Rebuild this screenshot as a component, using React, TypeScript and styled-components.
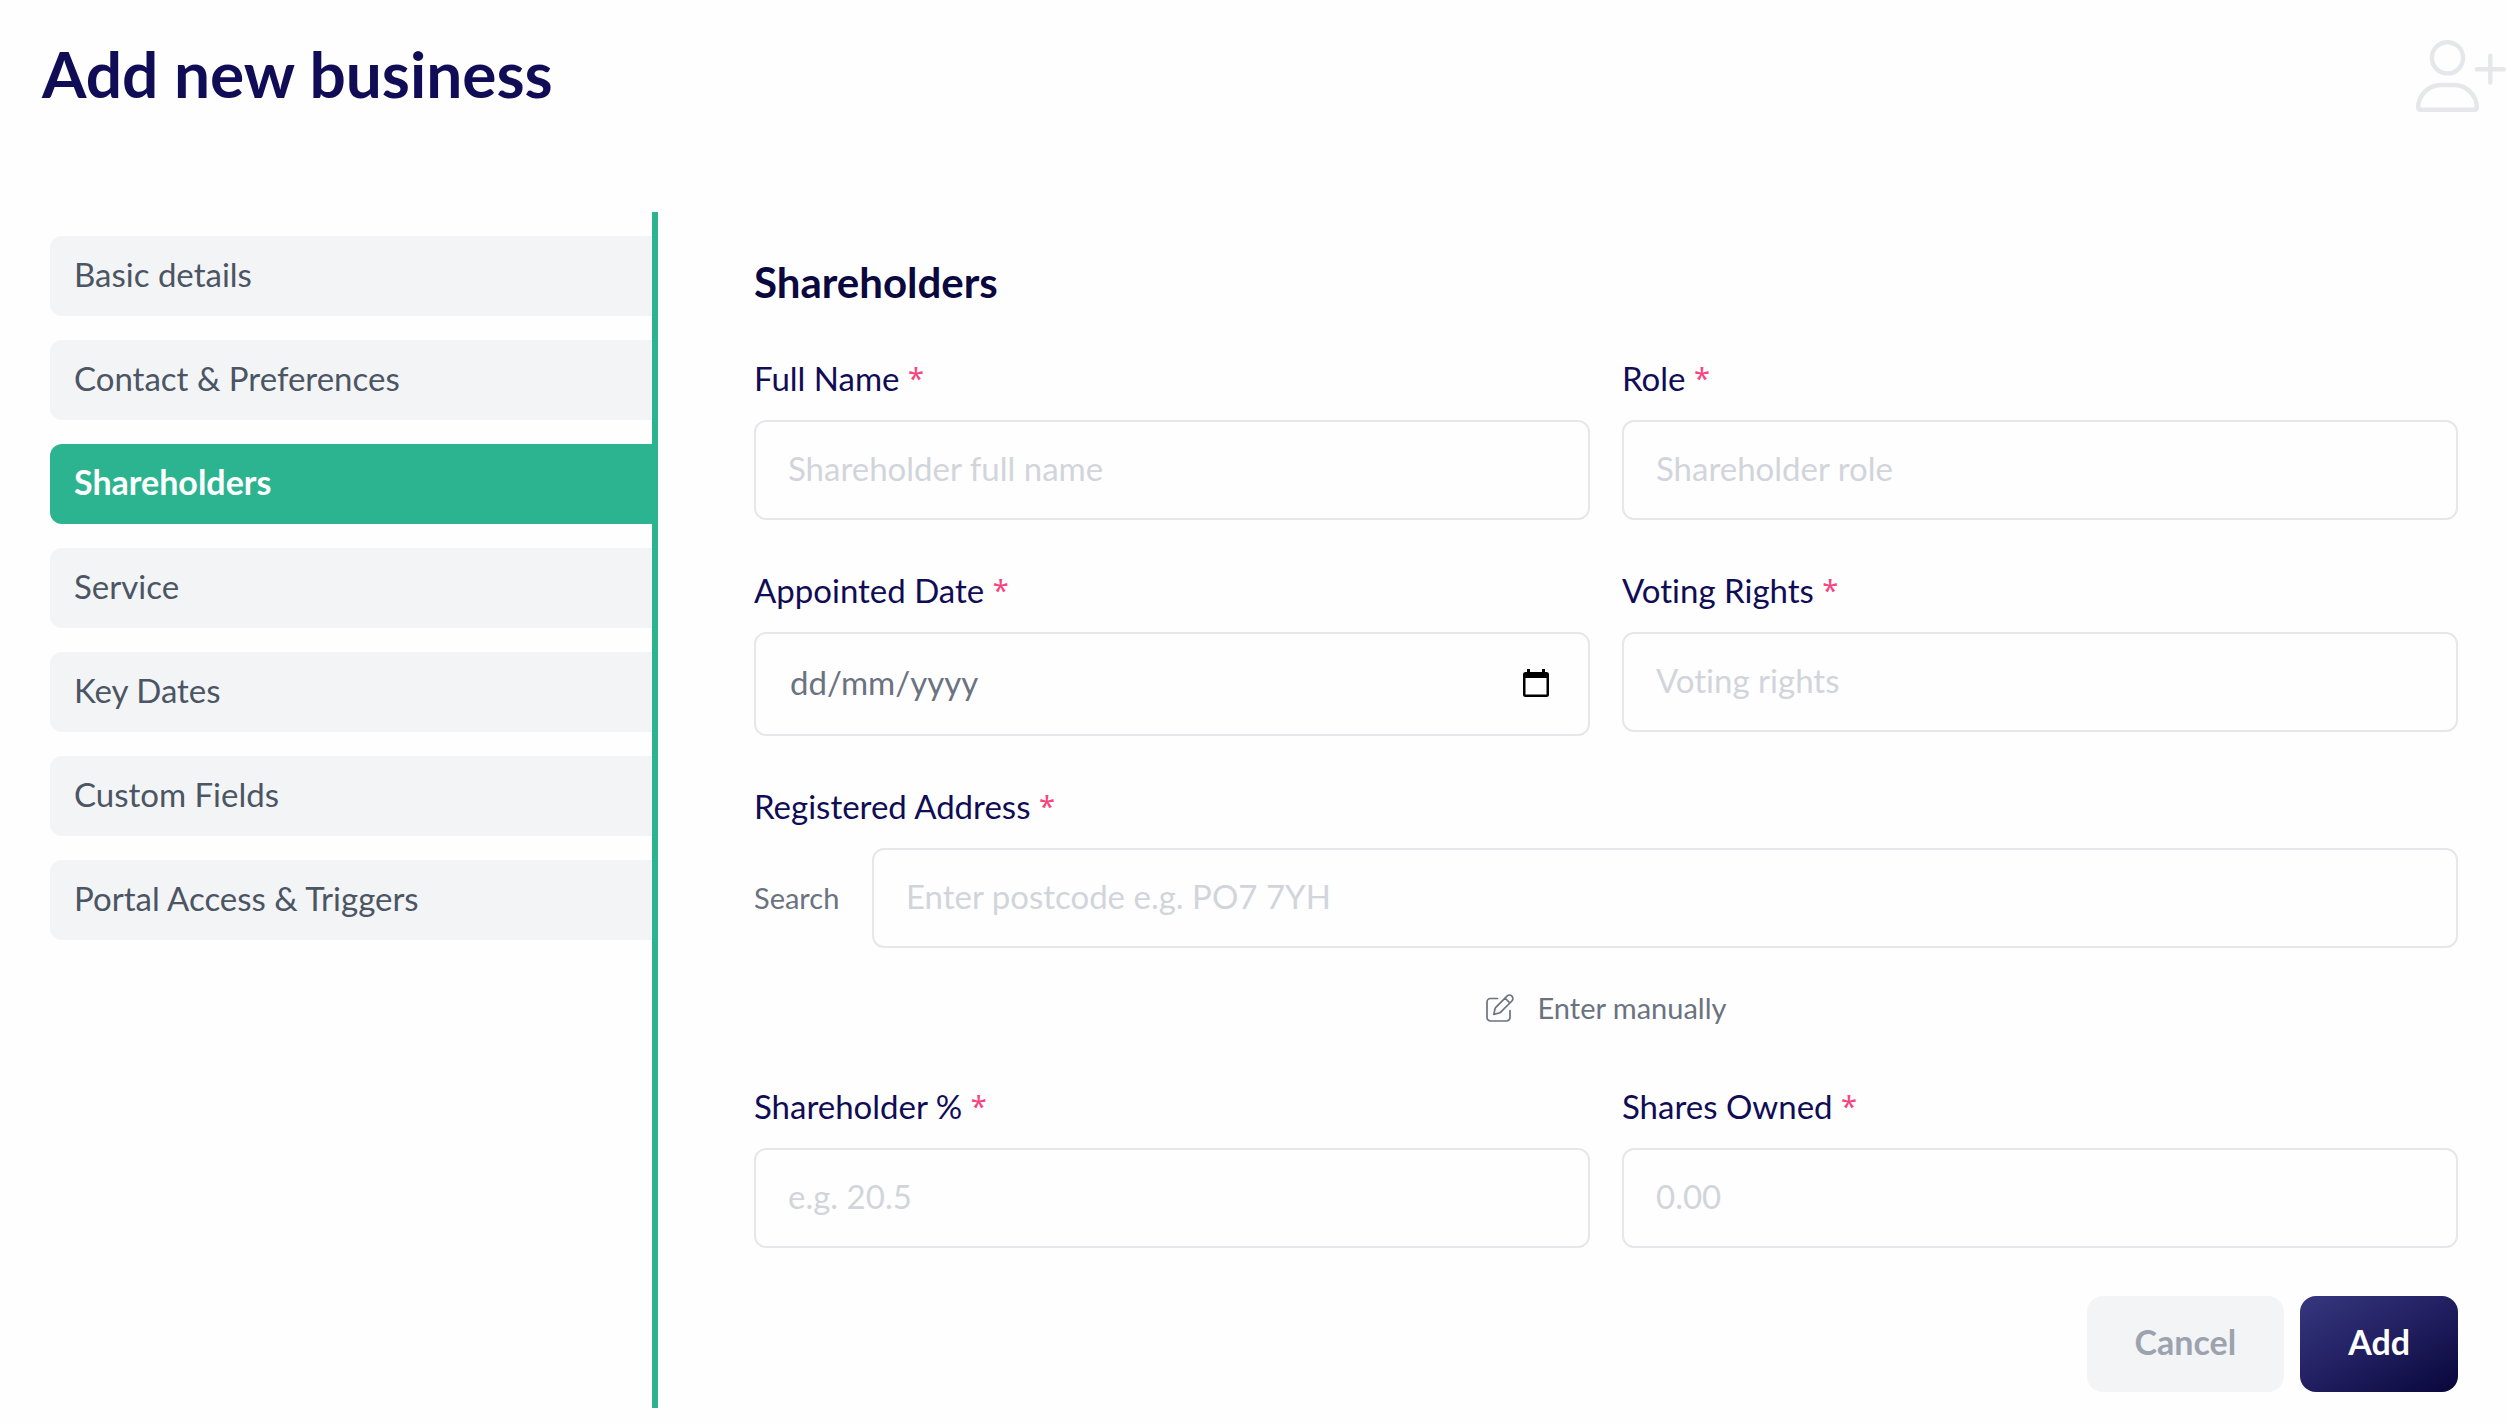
import React from 'react';
import styled, { createGlobalStyle, css } from 'styled-components';

const GlobalStyle = createGlobalStyle`
  *, *::before, *::after { box-sizing: border-box; }
  body {
    margin: 0;
    background: #fefefe;
    color: #100c55;
    font-family: Lato, "Noto Sans", sans-serif;
    font-size: 33px;
    line-height: 44px;
    font-variant-ligatures: none;
  }
  button, input { font: inherit; font-variant-ligatures: none; }
`;

const Page = styled.div`
  display: flex;
  flex-direction: column;
`;

const Header = styled.header`
  display: flex;
  justify-content: space-between;
  align-items: flex-start;
  padding: 36px 0 0 42px;
  height: 212px;
`;

const Title = styled.h1`
  margin: 0;
  font-size: 64px;
  line-height: 76px;
  font-weight: 700;
`;

const HeaderIcon = styled.svg`
  width: 90px;
  height: 72px;
  margin-top: 4px;
  color: #e5e7eb;
`;

const Body = styled.div`
  display: grid;
  grid-template-columns: 658px minmax(0, 1fr);
`;

const Sidebar = styled.nav`
  display: flex;
  flex-direction: column;
  gap: 24px;
  padding: 24px 0 24px 50px;
  border-right: 6px solid #2cb491;
`;

const Tab = styled.button<{ $active?: boolean }>`
  padding: 16px 24px 20px;
  border: 0;
  border-radius: 12px 0 0 12px;
  background: #f3f4f6;
  color: #4b5563;
  text-align: left;
  cursor: pointer;
  ${({ $active }) =>
    $active &&
    css`
      background: #2cb491;
      color: #ffffff;
      font-size: 34px;
      font-weight: 700;
    `}
`;

const Form = styled.form`
  display: flex;
  flex-direction: column;
  padding: 42px 48px 16px 96px;
`;

const Heading = styled.h2`
  margin: 0 0 46px;
  color: #0a083f;
  font-size: 42px;
  line-height: 56px;
  font-weight: 700;
`;

const Fields = styled.div`
  display: grid;
  grid-template-columns: repeat(2, minmax(0, 1fr));
  align-items: start;
  gap: 48px 32px;
`;

const FieldBox = styled.div<{ $wide?: boolean }>`
  display: flex;
  flex-direction: column;
  gap: 20px;
  ${({ $wide }) => $wide && 'grid-column: 1 / -1;'}
`;

const Label = styled.label`
  line-height: 44px;
`;

const Required = styled.span`
  color: #f8437f;
  font-family: "Noto Sans", sans-serif;
  font-size: 29px;
  line-height: 1;
  vertical-align: 2px;
`;

const Input = styled.input`
  width: 100%;
  min-width: 0;
  height: 100px;
  padding: 24px 32px 28px;
  border: 2px solid #e5e7eb;
  border-radius: 12px;
  background: transparent;
  color: #100c55;
  outline: none;
  &::placeholder { color: #d1d5db; opacity: 1; }
  &:focus { border-color: #2cb491; }
`;

const DateBox = styled.div`
  display: flex;
  align-items: center;
  height: 104px;
  padding: 0 32px 2px;
  border: 2px solid #e5e7eb;
  border-radius: 12px;
`;

const DateInput = styled.input`
  flex: 1;
  min-width: 0;
  padding: 0 2px 2px;
  border: 0;
  background: transparent;
  color: #6b7280;
  outline: none;
  &::placeholder { color: #6b7280; opacity: 1; }
`;

const IconButton = styled.button`
  display: flex;
  padding: 4px;
  border: 0;
  background: transparent;
  color: #000000;
  cursor: pointer;
`;

const CalendarIcon = styled.svg`
  width: 32px;
  height: 32px;
`;

const SearchRow = styled.div`
  display: grid;
  grid-template-columns: 86px minmax(0, 1fr);
  align-items: center;
  gap: 32px;
`;

const SearchLabel = styled.label`
  color: #6b7280;
  font-size: 29px;
`;

const ManualButton = styled.button`
  display: flex;
  align-items: center;
  align-self: center;
  gap: 24px;
  margin: 20px 0 8px;
  padding: 0;
  border: 0;
  background: transparent;
  color: #6b7280;
  font-size: 29px;
  line-height: 40px;
  cursor: pointer;
`;

const EditIcon = styled.svg`
  width: 28px;
  height: 28px;
`;

const Actions = styled.div`
  display: flex;
  justify-content: flex-end;
  gap: 16px;
  margin-top: 48px;
`;

const Button = styled.button<{ $primary?: boolean }>`
  padding: 24px 48px 28px;
  border: 0;
  border-radius: 16px;
  background: ${({ $primary }) =>
    $primary ? 'linear-gradient(150deg, #35377f 0%, #221f61 50%, #08063a 100%)' : '#f3f4f6'};
  color: ${({ $primary }) => ($primary ? '#ffffff' : '#9ca3af')};
  font-size: 34px;
  font-weight: 700;
  cursor: pointer;
`;

const tabs = [
  'Basic details',
  'Contact & Preferences',
  'Shareholders',
  'Service',
  'Key Dates',
  'Custom Fields',
  'Portal Access & Triggers',
];

function FieldLabel({ id, text }: { id: string; text: string }) {
  return (
    <Label htmlFor={id}>
      {text} <Required>*</Required>
    </Label>
  );
}

function TextField({ id, label, placeholder }: { id: string; label: string; placeholder: string }) {
  return (
    <FieldBox>
      <FieldLabel id={id} text={label} />
      <Input id={id} type="text" placeholder={placeholder} />
    </FieldBox>
  );
}

export default function App() {
  const [active, setActive] = React.useState('Shareholders');
  return (
    <Page>
      <GlobalStyle />
      <Header>
        <Title>Add new business</Title>
        <HeaderIcon viewBox="0 0 90 72" fill="none" stroke="currentColor" strokeWidth="4.4" strokeLinecap="round" strokeLinejoin="round" aria-hidden="true">
          <circle cx="31.5" cy="17.8" r="15.6" />
          <path d="M2.2 67.8C2.2 55.2 12.4 45 25 45h13c12.6 0 22.8 10.2 22.8 22.8a2 2 0 0 1-2 2H4.2a2 2 0 0 1-2-2z" />
          <path d="M60.9 29.3h26.9M74.3 15.6v26.9" />
        </HeaderIcon>
      </Header>
      <Body>
        <Sidebar aria-label="Sections">
          {tabs.map((tab) => (
            <Tab key={tab} type="button" $active={tab === active} onClick={() => setActive(tab)}>
              {tab}
            </Tab>
          ))}
        </Sidebar>
        <Form onSubmit={(e) => e.preventDefault()}>
          <Heading>Shareholders</Heading>
          <Fields>
            <TextField id="name" label="Full Name" placeholder="Shareholder full name" />
            <TextField id="role" label="Role" placeholder="Shareholder role" />
            <FieldBox>
              <FieldLabel id="appointed" text="Appointed Date" />
              <DateBox>
                <DateInput id="appointed" type="text" inputMode="numeric" placeholder="dd/mm/yyyy" />
                <IconButton type="button" aria-label="Choose date">
                  <CalendarIcon viewBox="0 0 32 32" aria-hidden="true">
                    <path
                      fill="currentColor"
                      fillRule="evenodd"
                      d="M7 2h3v3h12V2h3v3h1.500a2.500 2.500 0 0 1 2.500 2.500v20a2.500 2.500 0 0 1-2.500 2.500h-21A2.500 2.500 0 0 1 3 27.500v-20A2.500 2.500 0 0 1 5.500 5H7zM5.500 11v16.500h21V11z"
                    />
                  </CalendarIcon>
                </IconButton>
              </DateBox>
            </FieldBox>
            <TextField id="voting" label="Voting Rights" placeholder="Voting rights" />
            <FieldBox $wide>
              <FieldLabel id="postcode" text="Registered Address" />
              <SearchRow>
                <SearchLabel htmlFor="postcode">Search</SearchLabel>
                <Input id="postcode" type="text" placeholder="Enter postcode e.g. PO7 7YH" />
              </SearchRow>
              <ManualButton type="button">
                <EditIcon viewBox="0 0 28 28" fill="none" stroke="currentColor" strokeWidth="1.7" strokeLinecap="round" strokeLinejoin="round" aria-hidden="true">
                  <path d="M11.500 4.500H4.500A3.500 3.500 0 0 0 1 8v15.500A3.500 3.500 0 0 0 4.500 27h16a3.500 3.500 0 0 0 3.500-3.500v-7" />
                  <path d="M7.800 20.400l1.200-5.600a3 3 0 0 1 .8-1.500L21 2.100a3.450 3.450 0 0 1 4.900 4.900L14.700 18.200a3 3 0 0 1-1.500.8zM19 4.100l4.900 4.900" />
                </EditIcon>
                Enter manually
              </ManualButton>
            </FieldBox>
            <TextField id="percent" label="Shareholder %" placeholder="e.g. 20.5" />
            <TextField id="shares" label="Shares Owned" placeholder="0.00" />
          </Fields>
          <Actions>
            <Button type="button">Cancel</Button>
            <Button type="submit" $primary>Add</Button>
          </Actions>
        </Form>
      </Body>
    </Page>
  );
}
